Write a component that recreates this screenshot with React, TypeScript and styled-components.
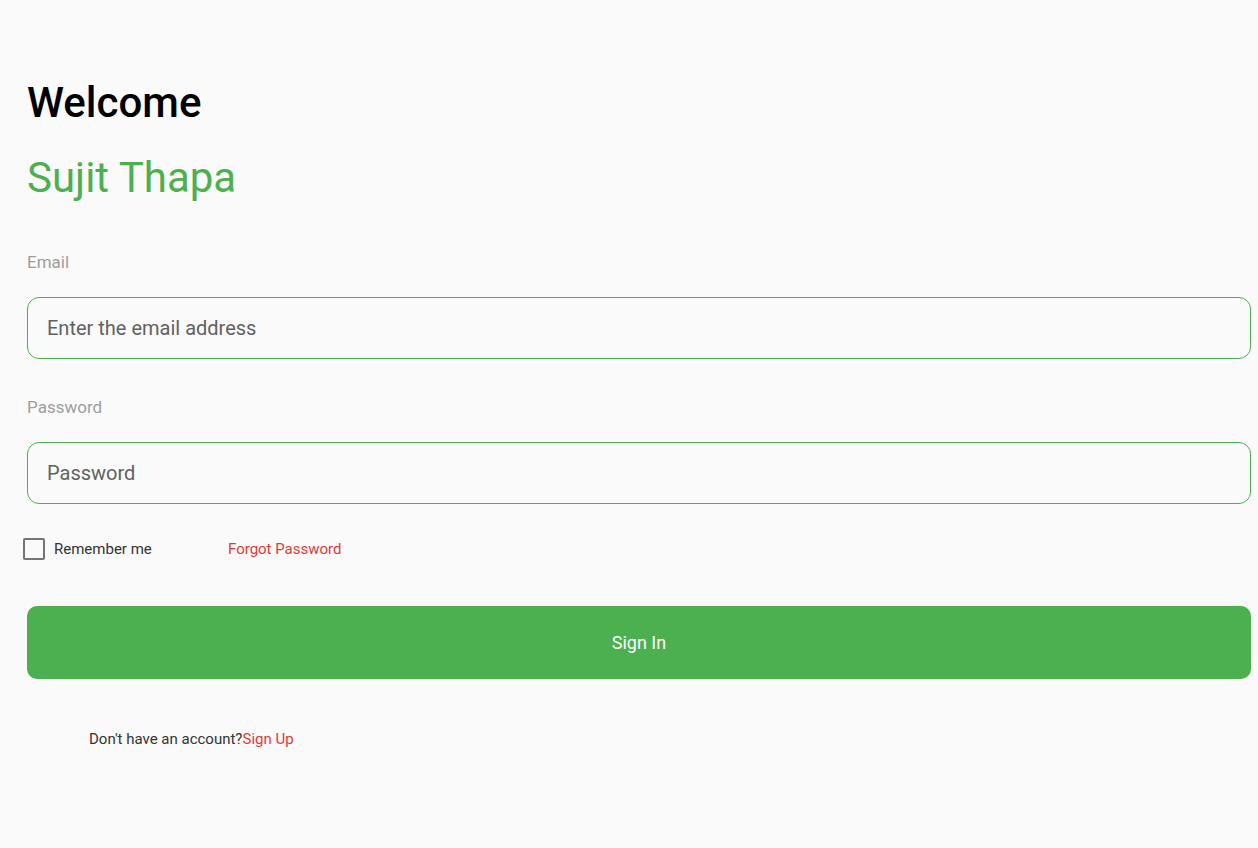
import { useState } from "react";
import styled, { createGlobalStyle } from "styled-components";

const GlobalStyle = createGlobalStyle`
	html, body {
		margin: 0;
		padding: 0;
		background: #fafafa;
	}
	body {
		font-family: Roboto, "Noto Sans", "Liberation Sans", sans-serif;
	}
	* {
		box-sizing: border-box;
	}
`;

const Page = styled.div`
	width: 1258px;
	height: 848px;
	padding: 77px 7px 0 27px;
	display: flex;
	flex-direction: column;
	background: #fafafa;
`;

const Title = styled.h1`
	margin: 0;
	font-size: 42px;
	font-weight: 500;
	line-height: 52px;
	color: #000;
`;

const Name = styled.h2`
	margin: 23px 0 0;
	font-size: 42px;
	font-weight: 400;
	line-height: 52px;
	color: #4caf50;
`;

const Label = styled.label`
	display: block;
	font-size: 17px;
	line-height: 24px;
	color: #9e9e9e;
`;

const FieldGroup = styled.div<{ $top: number }>`
	display: flex;
	flex-direction: column;
	gap: 23px;
	margin-top: ${({ $top }) => $top}px;
`;

const TextInput = styled.input`
	width: 100%;
	height: 62px;
	padding: 0 19px;
	border: 1px solid #4caf50;
	border-radius: 12px;
	background: transparent;
	font-family: inherit;
	font-size: 20px;
	color: #212121;
	outline: none;

	&::placeholder {
		color: #616161;
	}
`;

const OptionsRow = styled.div`
	display: flex;
	align-items: center;
	margin: 33px 0 0 -4px;
	height: 24px;
`;

const CheckLabel = styled.label`
	display: flex;
	align-items: center;
	gap: 9px;
	font-size: 15px;
	color: #333;
	cursor: pointer;
	width: 205px;
`;

const Box = styled.span<{ $checked: boolean }>`
	width: 22px;
	height: 22px;
	border: 2.5px solid;
	border-radius: 2px;
	background: ${({ $checked }) => ($checked ? "#4caf50" : "transparent")};
	border-color: ${({ $checked }) => ($checked ? "#4caf50" : "#757575")};
`;

const RedLink = styled.a`
	font-size: 15px;
	color: #e53935;
	text-decoration: none;
	cursor: pointer;
`;

const SignInButton = styled.button`
	margin-top: 45px;
	width: 100%;
	height: 73px;
	border: none;
	border-radius: 10px;
	background: #4caf50;
	color: #fff;
	font-family: inherit;
	font-size: 18px;
	font-weight: 400;
	cursor: pointer;
`;

const Footer = styled.div`
	margin: 50px 0 0 62px;
	font-size: 15px;
	line-height: 20px;
	color: #333;
`;

export default function App() {
	const [remember, setRemember] = useState(false);
	const [email, setEmail] = useState("");
	const [password, setPassword] = useState("");

	return (
		<>
			<GlobalStyle />
			<Page>
				<Title>Welcome</Title>
				<Name>Sujit Thapa</Name>
				<FieldGroup $top={46}>
					<Label>Email</Label>
					<TextInput
						placeholder="Enter the email address"
						value={email}
						onChange={(e) => setEmail(e.target.value)}
					/>
				</FieldGroup>
				<FieldGroup $top={36}>
					<Label>Password</Label>
					<TextInput
						type="password"
						placeholder="Password"
						value={password}
						onChange={(e) => setPassword(e.target.value)}
					/>
				</FieldGroup>
				<OptionsRow>
					<CheckLabel onClick={() => setRemember(!remember)}>
						<Box $checked={remember} />
						<span>Remember me</span>
					</CheckLabel>
					<RedLink>Forgot Password</RedLink>
				</OptionsRow>
				<SignInButton>Sign In</SignInButton>
				<Footer>
					Don't have an account?<RedLink>Sign Up</RedLink>
				</Footer>
			</Page>
		</>
	);
}
